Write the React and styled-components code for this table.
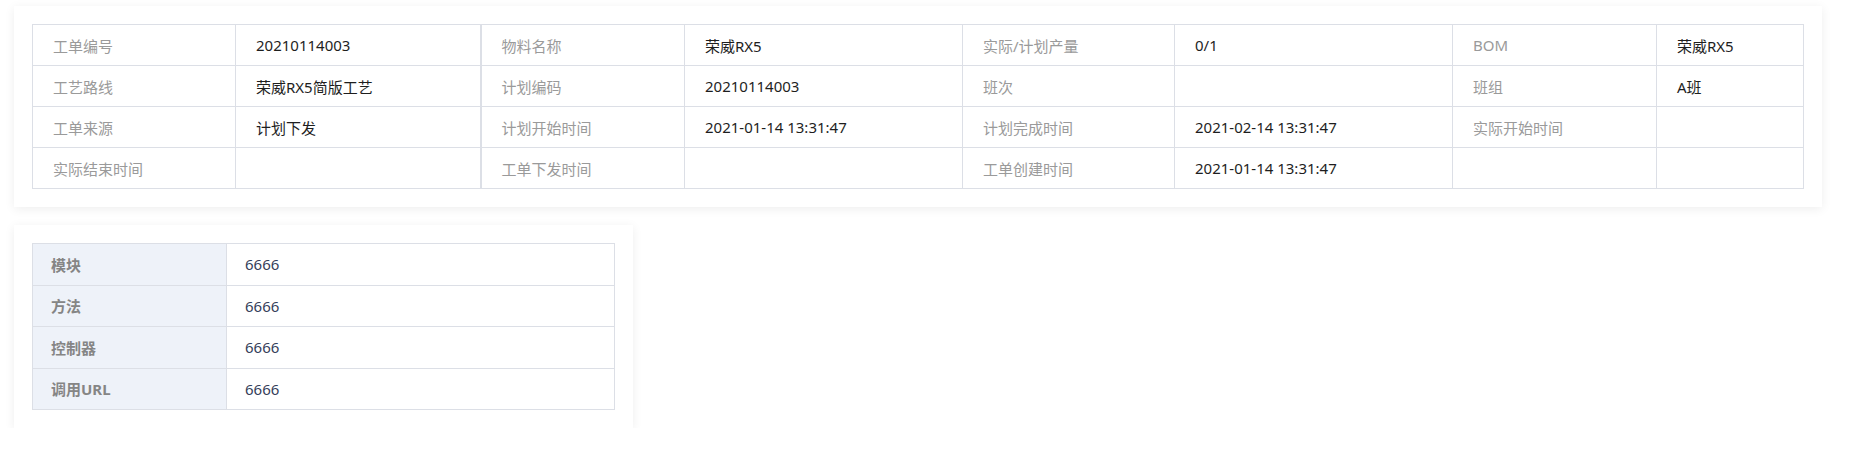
import styled, { createGlobalStyle } from "styled-components";

const GlobalStyle = createGlobalStyle`
  body {
    margin: 0;
    background: #ffffff;
    font-family: "Noto Sans", "Noto Sans CJK SC", sans-serif;
  }
`;

const Page = styled.div`
  display: flex;
  flex-direction: column;
  align-items: flex-start;
  gap: 18px;
  padding: 6px 0 0 14px;
`;

const Card = styled.div`
  width: ${(p) => p.width}px;
  padding: 18px;
  box-sizing: border-box;
  background: #ffffff;
  box-shadow: 0 2px 10px 0 rgba(0, 0, 0, 0.07);
`;

const Table = styled.table`
  width: 100%;
  border-collapse: collapse;
  table-layout: fixed;
  font-size: 15px;
`;

const Row = styled.tr`
  height: ${(p) => p.height}px;
`;

const Label = styled.td`
  border: 1px solid #dcdfe6;
  border-left-width: ${(p) => (p.thick ? 2 : 1)}px;
  padding: 0 20px;
  color: #9a9a9a;
  font-weight: 400;
  white-space: nowrap;
`;

const Value = styled.td`
  border: 1px solid #dcdfe6;
  padding: 0 20px;
  color: #1e1e1e;
  font-weight: 400;
  white-space: nowrap;
`;

const SideLabel = styled.td`
  border: 1px solid #dcdfe6;
  padding: 0 18px;
  background: #eef2f9;
  color: #858585;
  font-weight: 700;
`;

const SideValue = styled.td`
  border: 1px solid #dcdfe6;
  padding: 0 18px;
  color: #35405a;
`;

const widths = [203, 245, 204, 278, 212, 278, 204, 147];

const rows = [
  [
    ["工单编号", "20210114003"],
    ["物料名称", "荣威RX5"],
    ["实际/计划产量", "0/1"],
    ["BOM", "荣威RX5"],
  ],
  [
    ["工艺路线", "荣威RX5简版工艺"],
    ["计划编码", "20210114003"],
    ["班次", ""],
    ["班组", "A班"],
  ],
  [
    ["工单来源", "计划下发"],
    ["计划开始时间", "2021-01-14 13:31:47"],
    ["计划完成时间", "2021-02-14 13:31:47"],
    ["实际开始时间", ""],
  ],
  [
    ["实际结束时间", ""],
    ["工单下发时间", ""],
    ["工单创建时间", "2021-01-14 13:31:47"],
    ["", ""],
  ],
];

const api = [
  ["模块", "6666"],
  ["方法", "6666"],
  ["控制器", "6666"],
  ["调用URL", "6666"],
];

export default function App() {
  return (
    <Page>
      <GlobalStyle />
      <Card width={1808}>
        <Table>
          <colgroup>
            {widths.map((w, i) => (
              <col key={i} style={{ width: w }} />
            ))}
          </colgroup>
          <tbody>
            {rows.map((row, r) => (
              <Row key={r} height={41}>
                {row.map(([label, value], c) => [
                  <Label key={`l${c}`} thick={c === 1}>
                    {label}
                  </Label>,
                  <Value key={`v${c}`}>{value}</Value>,
                ])}
              </Row>
            ))}
          </tbody>
        </Table>
      </Card>
      <Card width={619}>
        <Table>
          <colgroup>
            <col style={{ width: 194 }} />
            <col />
          </colgroup>
          <tbody>
            {api.map(([label, value]) => (
              <Row key={label} height={41.5}>
                <SideLabel>{label}</SideLabel>
                <SideValue>{value}</SideValue>
              </Row>
            ))}
          </tbody>
        </Table>
      </Card>
    </Page>
  );
}
